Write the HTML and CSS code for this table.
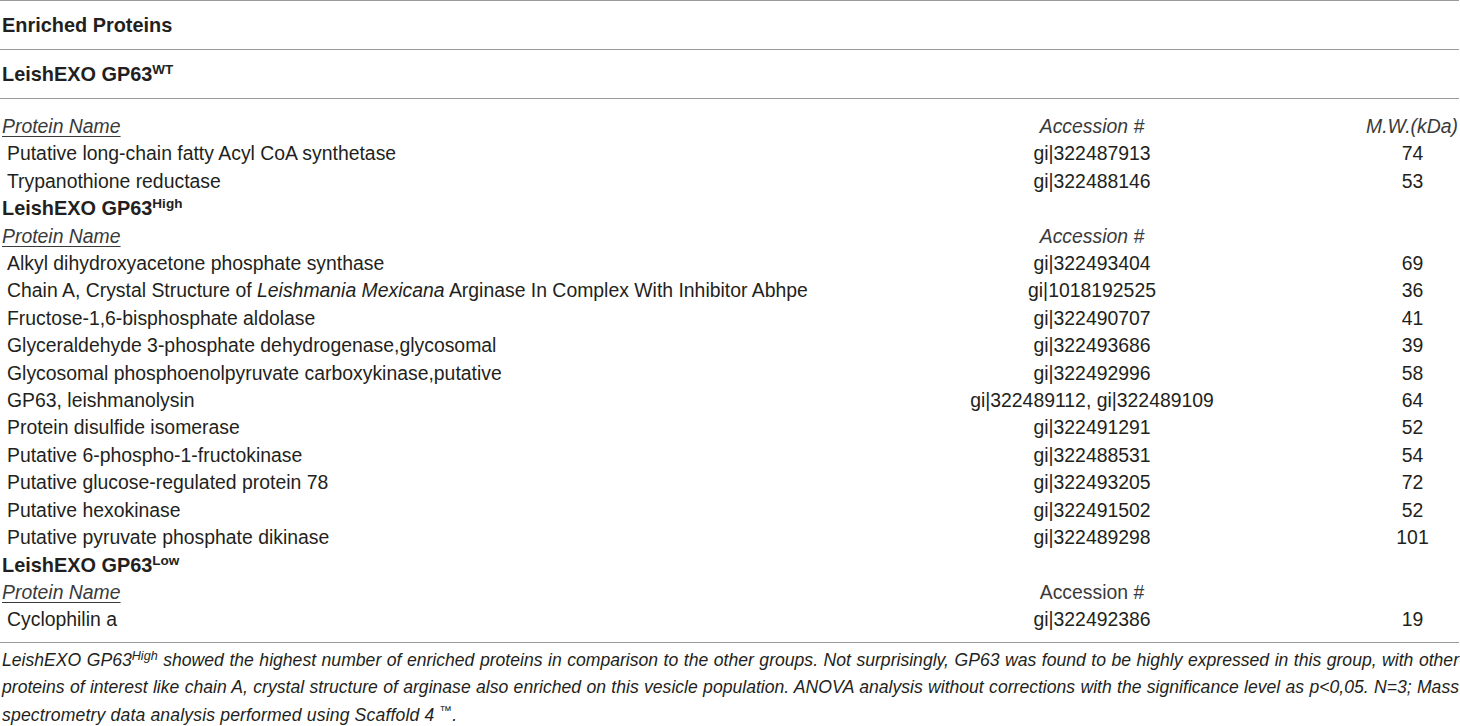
FILE: index.html
```html
<!DOCTYPE html>
<html lang="en">
<head>
<meta charset="utf-8">
<title>Enriched Proteins</title>
<link rel="stylesheet" href="styles.css">
</head>
<body>
<div class="sheet">
  <div class="band">Enriched Proteins</div>
  <div class="band">LeishEXO GP63<sup>WT</sup></div>
  <table class="grid">
    <colgroup>
      <col class="c-name">
      <col class="c-acc">
      <col class="c-mw">
    </colgroup>
    <tbody>
      <tr class="head"><td class="name"><span class="ul">Protein Name</span></td><td class="acc">Accession #</td><td class="mw mw-head">M.W.(kDa)</td></tr>
      <tr><td class="name">Putative long-chain fatty Acyl CoA synthetase</td><td class="acc">gi|322487913</td><td class="mw">74</td></tr>
      <tr><td class="name">Trypanothione reductase</td><td class="acc">gi|322488146</td><td class="mw">53</td></tr>
      <tr class="group"><td colspan="3">LeishEXO GP63<sup>High</sup></td></tr>
      <tr class="head"><td class="name"><span class="ul">Protein Name</span></td><td class="acc">Accession #</td><td class="mw"></td></tr>
      <tr><td class="name">Alkyl dihydroxyacetone phosphate synthase</td><td class="acc">gi|322493404</td><td class="mw">69</td></tr>
      <tr><td class="name">Chain A, Crystal Structure of <em>Leishmania Mexicana</em> Arginase In Complex With Inhibitor Abhpe</td><td class="acc">gi|1018192525</td><td class="mw">36</td></tr>
      <tr><td class="name">Fructose-1,6-bisphosphate aldolase</td><td class="acc">gi|322490707</td><td class="mw">41</td></tr>
      <tr><td class="name">Glyceraldehyde 3-phosphate dehydrogenase,glycosomal</td><td class="acc">gi|322493686</td><td class="mw">39</td></tr>
      <tr><td class="name">Glycosomal phosphoenolpyruvate carboxykinase,putative</td><td class="acc">gi|322492996</td><td class="mw">58</td></tr>
      <tr><td class="name">GP63, leishmanolysin</td><td class="acc">gi|322489112, gi|322489109</td><td class="mw">64</td></tr>
      <tr><td class="name">Protein disulfide isomerase</td><td class="acc">gi|322491291</td><td class="mw">52</td></tr>
      <tr><td class="name">Putative 6-phospho-1-fructokinase</td><td class="acc">gi|322488531</td><td class="mw">54</td></tr>
      <tr><td class="name">Putative glucose-regulated protein 78</td><td class="acc">gi|322493205</td><td class="mw">72</td></tr>
      <tr><td class="name">Putative hexokinase</td><td class="acc">gi|322491502</td><td class="mw">52</td></tr>
      <tr><td class="name">Putative pyruvate phosphate dikinase</td><td class="acc">gi|322489298</td><td class="mw">101</td></tr>
      <tr class="group"><td colspan="3">LeishEXO GP63<sup>Low</sup></td></tr>
      <tr class="head head-plain"><td class="name"><span class="ul">Protein Name</span></td><td class="acc">Accession #</td><td class="mw"></td></tr>
      <tr><td class="name">Cyclophilin a</td><td class="acc">gi|322492386</td><td class="mw">19</td></tr>
    </tbody>
  </table>
  <div class="caption">
    <span class="cap-line cap-just">LeishEXO GP63<sup>High</sup> showed the highest number of enriched proteins in comparison to the other groups. Not surprisingly, GP63 was found to be highly expressed in this group, with other</span>
    <span class="cap-line cap-just">proteins of interest like chain A, crystal structure of arginase also enriched on this vesicle population. ANOVA analysis without corrections with the significance level as p&lt;0,05. N=3; Mass</span>
    <span class="cap-line cap-last">spectrometry data analysis performed using Scaffold 4 <sup>™</sup>.</span>
  </div>
</div>
</body>
</html>
```

FILE: styles.css
```css
html, body {
  margin: 0;
  padding: 0;
  background: #ffffff;
}

body {
  font-family: "Liberation Sans", Arial, sans-serif;
  color: #231f20;
  font-size: 19.4px;
}

.sheet {
  width: 1459px;
  border-top: 1px solid #9a9a9a;
}

.band {
  height: 48px;
  line-height: 49px;
  padding-left: 2px;
  font-weight: bold;
  font-size: 19.9px;
  border-bottom: 1.5px solid #9a9a9a;
}

sup {
  font-size: 0.68em;
  line-height: 0;
  vertical-align: 0.55em;
}

.grid {
  width: 1459px;
  table-layout: fixed;
  border-collapse: collapse;
  margin-top: 14px;
  margin-bottom: 8px;
}

.c-name { width: 818px; }
.c-acc { width: 548px; }
.c-mw { width: 93px; }

.grid td {
  padding: 0;
  height: 27.41px;
  line-height: 27.41px;
  white-space: nowrap;
  vertical-align: middle;
}

.grid td.name {
  padding-left: 7px;
}

.grid td.acc {
  text-align: center;
}

.grid td.mw {
  text-align: center;
}

.grid .head td {
  font-style: italic;
  color: #3a3a3a;
}

.grid .head td.name {
  padding-left: 2px;
}

.grid .head td.mw-head {
  text-align: right;
  padding-right: 1px;
}

.head-plain td.acc {
  font-style: normal;
}

.ul {
  text-decoration: underline;
  text-decoration-thickness: 1px;
  text-underline-offset: 3px;
}

.grid .group td {
  font-weight: bold;
  font-size: 19.9px;
  padding-left: 2px;
}

.caption {
  border-top: 1.5px solid #9a9a9a;
  padding-top: 4px;
  padding-left: 2px;
  font-style: italic;
  font-size: 17.6px;
  color: #231f20;
}

.cap-line {
  display: block;
  line-height: 27.5px;
  white-space: nowrap;
}

.cap-just {
  text-align: justify;
  text-align-last: justify;
  white-space: normal;
}

.cap-last {
  letter-spacing: 0.15px;
}

.caption sup {
  font-size: 0.72em;
  vertical-align: 0.5em;
}
```
